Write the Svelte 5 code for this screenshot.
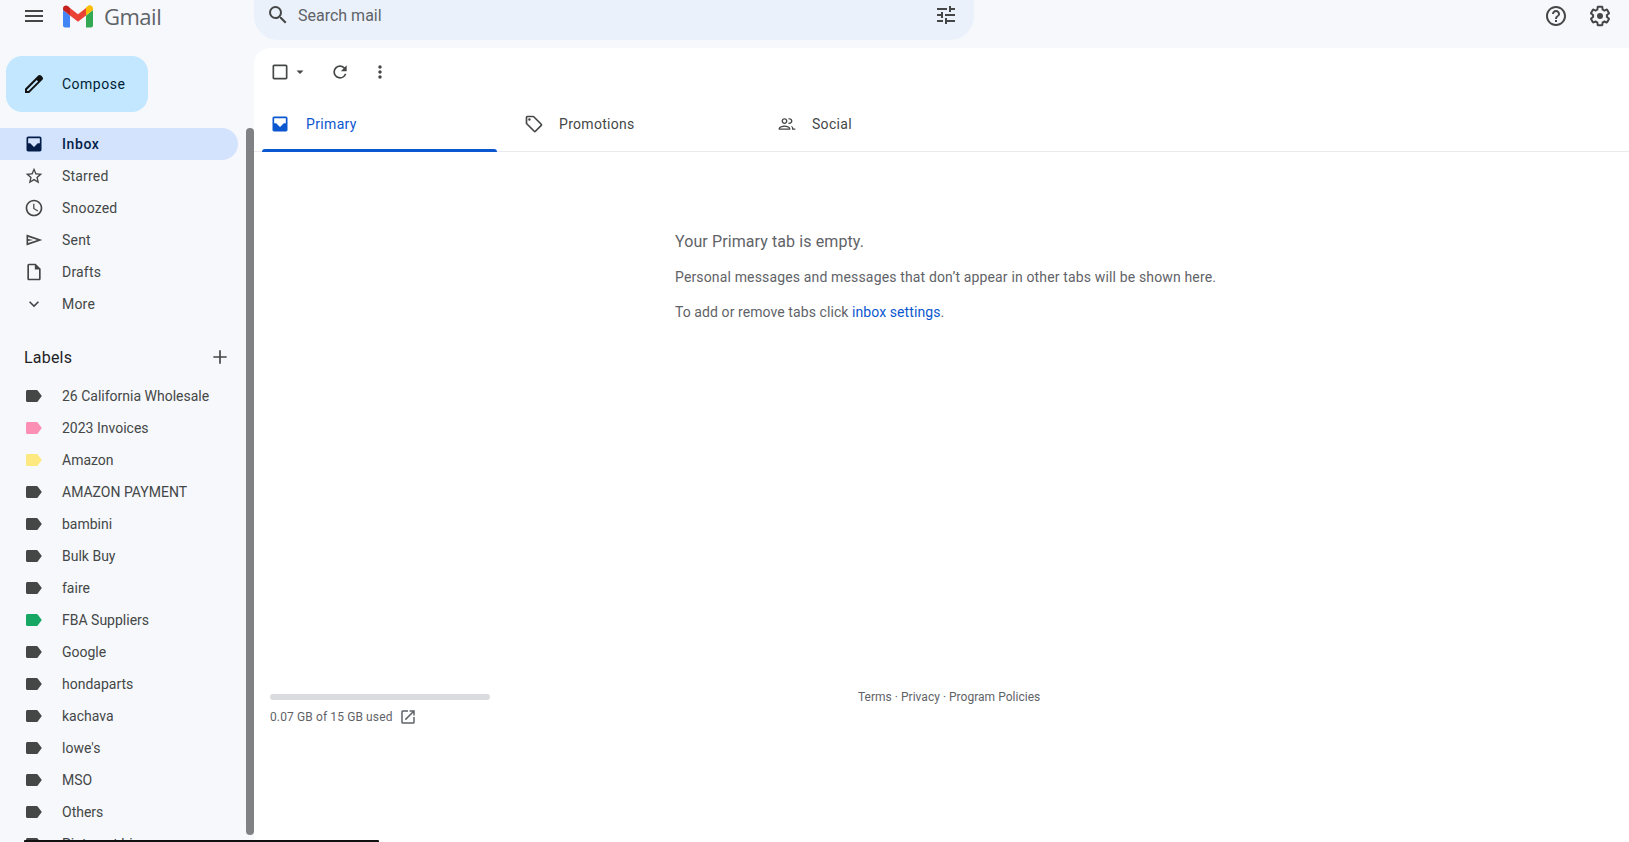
<script>
  const nav = [
    { name: 'Starred', d: 'M22 9.24l-7.19-.62L12 2 9.19 8.63 2 9.24l5.46 4.73L5.82 21 12 17.27 18.18 21l-1.63-7.03L22 9.24zM12 15.4l-3.76 2.27 1-4.28-3.32-2.88 4.38-.38L12 6.1l1.71 4.04 4.38.38-3.32 2.88 1 4.28L12 15.4z' },
    { name: 'Snoozed', d: 'M11.99 2C6.47 2 2 6.48 2 12s4.47 10 9.99 10C17.52 22 22 17.52 22 12S17.52 2 11.99 2zM12 20c-4.42 0-8-3.58-8-8s3.58-8 8-8 8 3.58 8 8-3.58 8-8 8zm.5-13H11v6l5.25 3.15.75-1.23-4.5-2.67V7z' },
    { name: 'Sent', d: 'M3 5.5v13L22 12 3 5.5zm2 2.8L15.8 12 5 15.7v-2.6l6-1.1-6-1.1V8.3z' },
    { name: 'Drafts', d: 'M14 2H6c-1.1 0-2 .9-2 2v16c0 1.1.9 2 2 2h12c1.1 0 2-.9 2-2V8l-6-6zm4 18H6V4h7v5h5v11z' },
    { name: 'More', d: 'M7.41 8.59L12 13.17l4.59-4.58L18 10l-6 6-6-6z' }
  ];
  const labels = [
    ['26 California Wholesale', '#444746'], ['2023 Invoices', '#fb8fb4'], ['Amazon', '#fde97f'],
    ['AMAZON PAYMENT', '#444746'], ['bambini', '#444746'], ['Bulk Buy', '#444746'], ['faire', '#444746'],
    ['FBA Suppliers', '#16a765'], ['Google', '#444746'], ['hondaparts', '#444746'], ['kachava', '#444746'],
    ["lowe's", '#444746'], ['MSO', '#444746'], ['Others', '#444746'], ['Pinterest bio', '#444746']
  ];
</script>

<div class="page">
  <header class="top">
    <div class="brand">
      <button class="burger" aria-label="Main menu">
        <svg viewBox="0 0 24 24" width="24" height="24"><path fill="#444746" d="M3 18h18v-2H3v2zm0-5h18v-2H3v2zm0-7v2h18V6H3z"/></svg>
      </button>
      <svg class="logo" viewBox="0 0 30 23" width="30" height="23">
        <path fill="#4285f4" d="M0 3.5V20.5C0 21.6.9 22.500 2 22.500H7V10.500L0 5z"/>
        <path fill="#34a853" d="M23 22.500h5c1.100 0 2-.9 2-2V5l-7 5.500z"/>
        <path fill="#fbbc04" d="M23 2.500V10.500l7-5.500V3.500C30 .5 26.500-.9 24.200 1.500z"/>
        <path fill="#ea4335" d="M7 10.500V3l8 6.200L23 3v7.500l-8 6.200z"/>
        <path fill="#c5221f" d="M0 5l7 5.500V3L5.500 1.600C3-.5 0 1 0 3.500z"/>
      </svg>
      <span class="wordmark">Gmail</span>
    </div>
    <div class="search">
      <svg viewBox="0 0 24 24" width="24" height="24"><path fill="#444746" d="M15.500 14h-.79l-.28-.27A6.470 6.470 0 0 0 16 9.500 6.500 6.500 0 1 0 9.500 16c1.610 0 3.090-.59 4.230-1.570l.27.28v.79l5 4.990L20.490 19l-4.990-5zm-6 0C7.010 14 5 11.990 5 9.500S7.010 5 9.500 5 14 7.010 14 9.500 11.990 14 9.500 14z"/></svg>
      <span class="placeholder">Search mail</span>
      <svg class="tune" viewBox="0 0 24 24" width="24" height="24"><path fill="#444746" d="M3 17v2h6v-2H3zM3 5v2h10V5H3zm10 16v-2h8v-2h-8v-2h-2v6h2zM7 9v2H3v2h4v2h2V9H7zm14 4v-2H11v2h10zm-6-4h2V7h4V5h-4V3h-2v6z"/></svg>
    </div>
    <div class="actions">
      <svg viewBox="0 0 24 24" width="24" height="24"><path fill="#444746" d="M11 18h2v-2h-2v2zm1-16C6.480 2 2 6.480 2 12s4.480 10 10 10 10-4.480 10-10S17.520 2 12 2zm0 18c-4.410 0-8-3.590-8-8s3.590-8 8-8 8 3.590 8 8-3.590 8-8 8zm0-14c-2.210 0-4 1.790-4 4h2c0-1.100.9-2 2-2s2 .9 2 2c0 2-3 1.750-3 5h2c0-2.250 3-2.500 3-5 0-2.210-1.790-4-4-4z"/></svg>
      <svg viewBox="0 0 24 24" width="24" height="24"><path fill="#444746" d="M13.850 22.250h-3.700c-.74 0-1.360-.54-1.450-1.270l-.27-1.890c-.27-.14-.53-.29-.79-.46l-1.800.72c-.7.260-1.470-.03-1.810-.65L2.200 15.530c-.35-.66-.2-1.440.36-1.880l1.530-1.190c-.01-.15-.02-.3-.02-.46 0-.15.010-.31.020-.46l-1.520-1.190c-.59-.45-.74-1.260-.37-1.880l1.850-3.190c.34-.62 1.110-.9 1.790-.63l1.810.73c.26-.17.520-.32.780-.46l.27-1.910c.09-.7.710-1.250 1.440-1.250h3.700c.74 0 1.360.54 1.450 1.270l.27 1.890c.27.140.53.290.79.460l1.800-.72c.71-.26 1.480.03 1.820.65l1.840 3.180c.36.660.2 1.440-.36 1.880l-1.520 1.190c.01.150.02.300.02.460s-.01.310-.02.460l1.520 1.190c.56.450.72 1.230.37 1.860l-1.860 3.220c-.34.620-1.110.9-1.800.63l-1.800-.72c-.26.170-.52.320-.78.460l-.27 1.910c-.1.680-.72 1.230-1.450 1.230zm-3.230-2h2.760l.37-2.550.53-.22c.44-.18.880-.44 1.340-.78l.45-.34 2.380.96 1.380-2.400-2.030-1.580.07-.56c.03-.26.060-.53.060-.78s-.03-.53-.06-.78l-.07-.56 2.030-1.580-1.390-2.400-2.390.96-.45-.35c-.42-.32-.87-.58-1.330-.77l-.52-.22-.37-2.550h-2.760l-.37 2.550-.53.210c-.44.190-.88.440-1.340.790l-.45.330-2.380-.95-1.390 2.390 2.030 1.580-.07.560a7 7 0 0 0-.06.790c0 .26.020.53.060.78l.07.560-2.030 1.580 1.380 2.400 2.390-.96.450.35c.430.330.860.580 1.330.770l.53.220.38 2.550z"/><circle fill="#444746" cx="12" cy="12" r="3"/></svg>
    </div>
  </header>

  <div class="body">
    <aside class="side">
      <div class="side-inner">
        <button class="compose">
          <svg viewBox="0 0 24 24" width="24" height="24"><path fill="#111" d="M20.410 4.940l-1.350-1.350c-.78-.78-2.050-.78-2.830 0L3 16.820V21h4.180L20.410 7.770c.79-.78.790-2.050 0-2.830zm-14 14.120L5 19v-1.360l9.660-9.660 1.410 1.410-9.660 9.670z"/></svg>
          <span>Compose</span>
        </button>
        <div class="row active">
          <svg viewBox="0 0 24 24" width="20" height="20"><path fill="#041e49" d="M19 3H5c-1.100 0-2 .9-2 2v14c0 1.100.9 2 2 2h14c1.100 0 2-.9 2-2V5c0-1.100-.9-2-2-2zm-7 12.500L7.500 11H5V5h14v6h-2.500L12 15.500z"/></svg>
          <span>Inbox</span>
        </div>
        {#each nav as n}
          <div class="row">
            <svg viewBox="0 0 24 24" width="20" height="20"><path fill="#444746" d={n.d}/></svg>
            <span>{n.name}</span>
          </div>
        {/each}
        <div class="labels-head">
          <span>Labels</span>
          <svg viewBox="0 0 24 24" width="20" height="20"><path fill="#444746" d="M20 13h-7v7h-2v-7H4v-2h7V4h2v7h7v-2z"/></svg>
        </div>
        {#each labels as [name, color]}
          <div class="row label">
            <svg viewBox="0 0 16 12" width="16" height="12"><path fill={color} d="M1.500 0h9c.5 0 .9.200 1.200.6L15.800 6l-4.100 5.400c-.3.400-.7.600-1.200.6h-9C.7 12 0 11.300 0 10.500v-9C0 .7.700 0 1.500 0z"/></svg>
            <span>{name}</span>
          </div>
        {/each}
      </div>
      <div class="thumb"></div>
    </aside>

    <main class="main">
      <div class="toolbar">
        <svg viewBox="0 0 24 24" width="20" height="20"><path fill="#444746" d="M19 5v14H5V5h14m0-2H5c-1.100 0-2 .9-2 2v14c0 1.100.9 2 2 2h14c1.100 0 2-.9 2-2V5c0-1.100-.9-2-2-2z"/></svg>
        <svg class="caret" viewBox="0 0 20 20" width="20" height="20"><path fill="#444746" d="M5 8l5 5 5-5z"/></svg>
        <svg class="refresh" viewBox="0 0 24 24" width="20" height="20"><path fill="#444746" d="M17.650 6.350A7.958 7.958 0 0 0 12 4a8 8 0 1 0 7.730 10h-2.080A5.990 5.990 0 0 1 12 18a6 6 0 1 1 0-12c1.660 0 3.140.69 4.220 1.780L13 11h7V4l-2.350 2.350z"/></svg>
        <svg class="dots" viewBox="0 0 24 24" width="20" height="20"><path fill="#444746" d="M12 8c1.100 0 2-.9 2-2s-.9-2-2-2-2 .9-2 2 .9 2 2 2zm0 2c-1.100 0-2 .9-2 2s.9 2 2 2 2-.9 2-2-.9-2-2-2zm0 6c-1.100 0-2 .9-2 2s.9 2 2 2 2-.9 2-2-.9-2-2-2z"/></svg>
      </div>

      <nav class="tabs">
        <div class="tab on">
          <svg viewBox="0 0 24 24" width="20" height="20"><path fill="#0b57d0" d="M19 3H5c-1.100 0-2 .9-2 2v14c0 1.100.9 2 2 2h14c1.100 0 2-.9 2-2V5c0-1.100-.9-2-2-2zm-7 12.500L7.500 11H5V5h14v6h-2.500L12 15.500z"/></svg>
          <span>Primary</span>
        </div>
        <div class="tab">
          <svg viewBox="0 0 24 24" width="20" height="20"><path fill="#444746" d="M21.410 11.580l-9-9A2 2 0 0 0 11 2H4a2 2 0 0 0-2 2v7c0 .55.220 1.050.59 1.420l9 9a2 2 0 0 0 2.820 0l7-7a2 2 0 0 0 0-2.840zM13 20l-9-9V4h7v-.010l9 9-7 7.010z"/><circle fill="#444746" cx="6.500" cy="6.500" r="1.500"/></svg>
          <span>Promotions</span>
        </div>
        <div class="tab social">
          <svg viewBox="0 0 24 24" width="20" height="20"><path fill="#444746" d="M9 12c1.930 0 3.500-1.570 3.500-3.500S10.930 5 9 5 5.500 6.570 5.500 8.500 7.070 12 9 12zm0-5.400c1.050 0 1.900.85 1.900 1.900s-.85 1.900-1.900 1.900-1.900-.85-1.900-1.900.85-1.900 1.900-1.900zM9 13.750c-2.340 0-7 1.170-7 3.500V19h14v-1.750c0-2.330-4.660-3.500-7-3.500zM3.600 17.400c.5-1 3.400-2.050 5.400-2.050s4.900 1.050 5.400 2.050H3.600zM16.040 13.810c1.160.84 1.960 1.960 1.960 3.440V19h4v-1.600h-2.400v-.15c0-1.500-1.700-3-3.560-3.440zM15 12c1.930 0 3.500-1.570 3.500-3.500S16.930 5 15 5c-.54 0-1.040.13-1.500.35.200.5.600 1 .7 1.350.250-.1.500-.1.800-.1 1.050 0 1.900.85 1.900 1.900s-.85 1.900-1.900 1.900c-.3 0-.55 0-.8-.1-.1.350-.5.850-.7 1.350.46.220.96.350 1.500.35z"/></svg>
          <span>Social</span>
        </div>
      </nav>

      <section class="empty">
        <h2>Your Primary tab is empty.</h2>
        <p>Personal messages and messages that don’t appear in other tabs will be shown here.</p>
        <p class="hint">To add or remove tabs click <a href="#settings">inbox settings</a>.</p>
      </section>

      <footer class="foot">
        <div class="storage">
          <div class="bar"></div>
          <div class="used">
            <span>0.07 GB of 15 GB used</span>
            <svg viewBox="0 0 24 24" width="18" height="18"><path fill="#5f6368" d="M19 19H5V5h7V3H5a2 2 0 0 0-2 2v14a2 2 0 0 0 2 2h14c1.100 0 2-.9 2-2v-7h-2v7zM14 3v2h3.590l-9.830 9.830 1.410 1.410L19 6.410V10h2V3h-7z"/></svg>
          </div>
        </div>
        <div class="terms">Terms · Privacy · Program Policies</div>
      </footer>
    </main>
  </div>
  <div class="edge"></div>
</div>

<style>
  :global(body) { margin: 0; background: #f6f8fc; }
  .page {
    position: relative;
    width: 1629px;
    height: 842px;
    overflow: hidden;
    background: #f6f8fc;
    font-family: Roboto, "Liberation Sans", sans-serif;
    color: #444746;
    font-size: 14px;
  }
  svg { display: block; flex: none; }
  button { border: 0; background: none; padding: 0; font: inherit; color: inherit; }

  .top { height: 48px; display: flex; align-items: flex-start; }
  .brand { width: 254px; height: 32px; display: flex; align-items: center; flex: none; }
  .burger { margin-left: 22px; width: 24px; height: 24px; }
  .logo { margin-left: 17px; }
  .wordmark { margin-left: 11px; font: 22px/1 "Open Sans", Roboto, sans-serif; letter-spacing: -0.5px; color: #5f6368; }
  .search {
    width: 720px;
    height: 40px;
    box-sizing: border-box;
    padding: 0 16px 10px 12px;
    display: flex;
    align-items: center;
    gap: 8px;
    background: #eaf1fb;
    border-radius: 0 0 24px 24px;
    flex: none;
  }
  .placeholder { font-size: 16px; color: #5f6368; }
  .tune { margin-left: auto; }
  .actions { margin-left: auto; display: flex; gap: 20px; margin-right: 17px; padding-top: 4px; }

  .body { display: flex; height: 794px; }
  .side { position: relative; width: 254px; flex: none; overflow: hidden; }
  .side-inner { width: 238px; }
  .compose {
    margin: 8px 0 16px 6px;
    width: 142px;
    height: 56px;
    display: flex;
    align-items: center;
    gap: 16px;
    padding-left: 16px;
    box-sizing: border-box;
    background: #c2e7ff;
    border-radius: 16px;
    color: #001d35;
    font-size: 14px;
    font-weight: 400;
    letter-spacing: 0.5px;
  }
  .row {
    height: 32px;
    display: flex;
    align-items: center;
    padding-left: 24px;
    box-sizing: border-box;
    border-radius: 0 16px 16px 0;
    letter-spacing: 0.2px;
  }
  .row svg { margin-right: 18px; }
  .row.label { padding-left: 26px; letter-spacing: 0; }
  .row.label svg { margin-right: 20px; }
  .row.active { background: #d3e3fd; color: #041e49; font-weight: 500; letter-spacing: 0.6px; }
  .labels-head {
    margin-top: 21px;
    height: 32px;
    margin-bottom: 7px;
    padding: 0 8px 0 24px;
    display: flex;
    align-items: center;
    justify-content: space-between;
    font-size: 16px;
    color: #1f1f1f;
    letter-spacing: 0.2px;
  }
  .thumb {
    position: absolute;
    right: 0;
    top: 80px;
    bottom: 7px;
    width: 8px;
    border-radius: 4px;
    background: #808184;
  }

  .main { flex: 1; min-width: 0; display: flex; flex-direction: column; background: #fff; border-top-left-radius: 16px; }
  .toolbar { height: 48px; display: flex; align-items: center; padding-left: 16px; }
  .caret { margin-left: 3px; width: 14px; height: 14px; }
  .refresh { margin-left: 23px; }
  .dots { margin-left: 20px; }
  .tabs { height: 56px; display: flex; border-bottom: 1px solid #e8eaed; box-sizing: border-box; padding-left: 8px; }
  .tab {
    width: 253px;
    display: flex;
    align-items: center;
    gap: 16px;
    padding-left: 8px;
    box-sizing: border-box;
    position: relative;
    font-weight: 400;
    letter-spacing: 0.3px;
  }
  .tab.on { color: #0b57d0; width: 235px; gap: 16px; font-weight: 400; letter-spacing: 0.35px; }
  .tab.on::after {
    content: "";
    position: absolute;
    left: 0;
    right: 0;
    bottom: -1px;
    height: 3px;
    background: #0b57d0;
    border-radius: 3px 3px 0 0;
  }
  .tab:nth-child(2) { padding-left: 27px; gap: 15px; }
  .tab.social { padding-left: 27px; gap: 15px; }

  .empty { height: 542px; box-sizing: border-box; padding: 79px 0 0 421px; flex: none; }
  h2 { margin: 0 0 15px; font-size: 16px; font-weight: 400; line-height: 22px; color: #5f6368; letter-spacing: 0.1px; }
  p { margin: 0 0 16px; line-height: 19px; font-size: 14px; color: #5f6368; letter-spacing: 0.15px; }
  .hint { letter-spacing: 0.08px; }
  a { color: #0b57d0; text-decoration: none; }

  .foot { position: relative; display: flex; font-size: 12px; color: #5f6368; }
  .storage { margin-left: 16px; width: 220px; }
  .bar { height: 6px; background: #dadce0; border-radius: 3px; margin-top: 0; }
  .used { display: flex; align-items: center; gap: 6px; margin-top: 6px; height: 22px; }
  .used span { letter-spacing: 0.12px; }
  .terms { position: absolute; left: 604px; top: -4px; line-height: 14px; letter-spacing: 0.02px; }

  .edge { position: absolute; left: 24px; bottom: 0; width: 355px; height: 2px; background: #111; border-radius: 1px 1px 0 0; }
</style>
